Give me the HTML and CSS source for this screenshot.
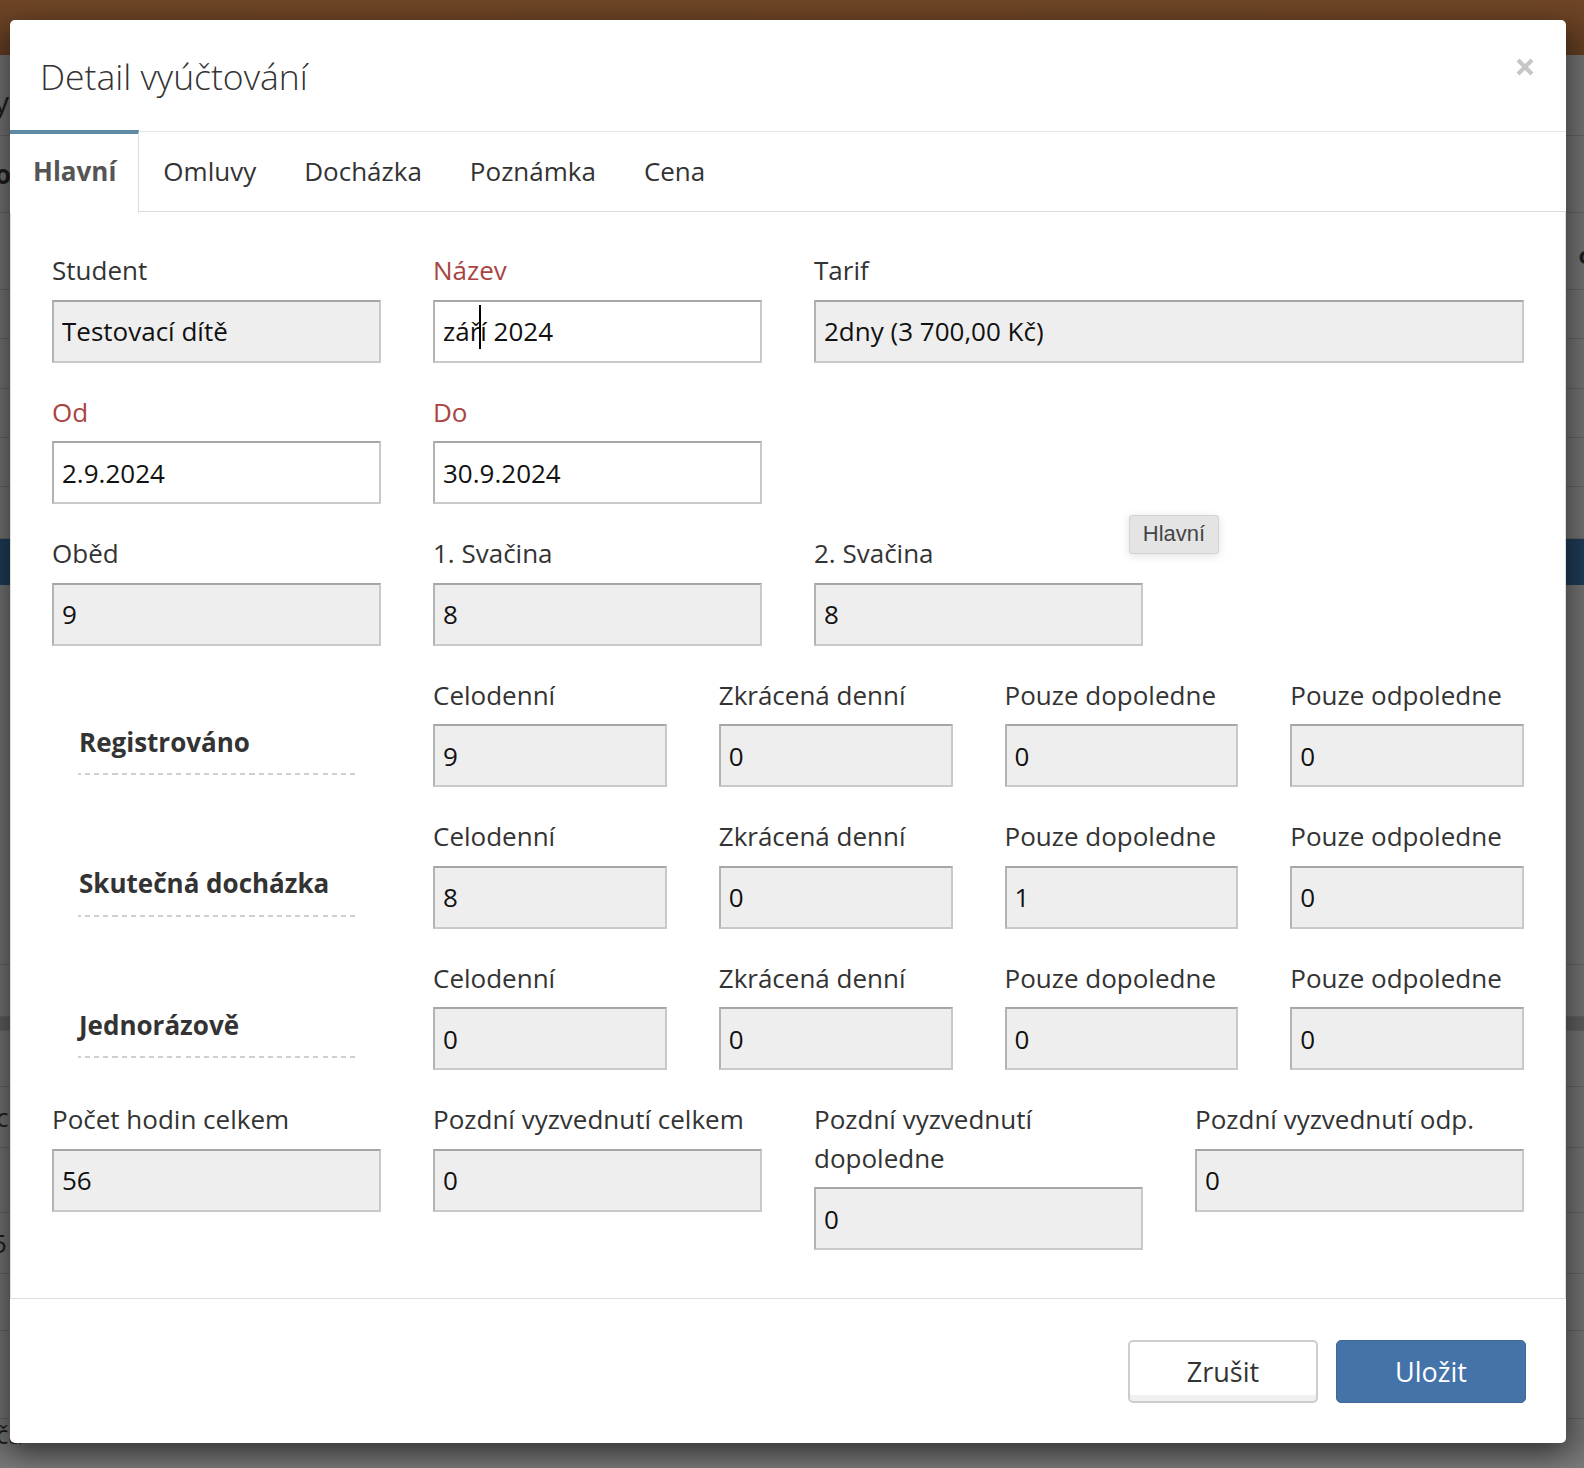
FILE: index.html
```html
<!DOCTYPE html>
<html lang="cs">
<head>
<meta charset="utf-8">
<title>Detail vyúčtování</title>
<link rel="stylesheet" href="styles.css">
</head>
<body>
<div class="page">
  <div class="topbar"></div>
  <div class="bg-row h81"><span class="frag-l fy">y</span></div>
  <div class="bg-row h77"><span class="frag-l fo">o</span></div>
  <div class="bg-row h77"><span class="frag-r">o...</span></div>
  <div class="bg-row h49"></div>
  <div class="bg-row h50"></div>
  <div class="bg-row h49"></div>
  <div class="bg-row h49"></div>
  <div class="bg-row h52"></div>
  <div class="bg-row blue"></div>
  <div class="bg-row h380"></div>
  <div class="bg-row h52"></div>
  <div class="bg-row dark"></div>
  <div class="bg-row h56"></div>
  <div class="bg-row h61"><span class="frag-l fc">c</span></div>
  <div class="bg-row h65"></div>
  <div class="bg-row h61"><span class="frag-l f5">5</span></div>
  <div class="bg-row h57"></div>
  <div class="bg-row h88"></div>
  <div class="bg-row h50 top"><span class="frag-l fa">ča</span></div>
</div>

<div class="modal">
  <div class="modal-header">
    <h4 class="modal-title">Detail vyúčtování</h4>
    <button class="close" type="button" aria-label="Zavřít">
      <svg viewBox="0 0 18 18" width="18" height="18"><path d="M2 2 L16 16 M16 2 L2 16" stroke="#c6c6c6" stroke-width="4.2" fill="none"/></svg>
    </button>
  </div>

  <ul class="tabs">
    <li class="tab active">Hlavní</li>
    <li class="tab">Omluvy</li>
    <li class="tab">Docházka</li>
    <li class="tab">Poznámka</li>
    <li class="tab">Cena</li>
  </ul>

  <div class="pane">
    <div class="row">
      <div class="group"><label>Student</label><input class="ctl ro" readonly value="Testovací dítě"></div>
      <div class="group"><label class="req">Název</label><div class="caret-wrap"><input class="ctl" value="září 2024"><span class="caret"></span></div></div>
      <div class="group span2"><label>Tarif</label><input class="ctl ro" readonly value="2dny (3 700,00 Kč)"></div>
    </div>

    <div class="row">
      <div class="group"><label class="req">Od</label><input class="ctl" value="2.9.2024"></div>
      <div class="group"><label class="req">Do</label><input class="ctl" value="30.9.2024"></div>
    </div>

    <div class="row">
      <div class="group"><label>Oběd</label><input class="ctl ro" readonly value="9"></div>
      <div class="group"><label>1. Svačina</label><input class="ctl ro" readonly value="8"></div>
      <div class="group"><label>2. Svačina</label><input class="ctl ro" readonly value="8"></div>
    </div>

    <div class="row">
      <div class="sect"><span>Registrováno</span></div>
      <div class="sub">
        <div class="group"><label>Celodenní</label><input class="ctl ro" readonly value="9"></div>
        <div class="group"><label>Zkrácená denní</label><input class="ctl ro" readonly value="0"></div>
        <div class="group"><label>Pouze dopoledne</label><input class="ctl ro" readonly value="0"></div>
        <div class="group"><label>Pouze odpoledne</label><input class="ctl ro" readonly value="0"></div>
      </div>
    </div>

    <div class="row">
      <div class="sect"><span>Skutečná docházka</span></div>
      <div class="sub">
        <div class="group"><label>Celodenní</label><input class="ctl ro" readonly value="8"></div>
        <div class="group"><label>Zkrácená denní</label><input class="ctl ro" readonly value="0"></div>
        <div class="group"><label>Pouze dopoledne</label><input class="ctl ro" readonly value="1"></div>
        <div class="group"><label>Pouze odpoledne</label><input class="ctl ro" readonly value="0"></div>
      </div>
    </div>

    <div class="row">
      <div class="sect"><span>Jednorázově</span></div>
      <div class="sub">
        <div class="group"><label>Celodenní</label><input class="ctl ro" readonly value="0"></div>
        <div class="group"><label>Zkrácená denní</label><input class="ctl ro" readonly value="0"></div>
        <div class="group"><label>Pouze dopoledne</label><input class="ctl ro" readonly value="0"></div>
        <div class="group"><label>Pouze odpoledne</label><input class="ctl ro" readonly value="0"></div>
      </div>
    </div>

    <div class="row">
      <div class="group"><label>Počet hodin celkem</label><input class="ctl ro" readonly value="56"></div>
      <div class="group"><label>Pozdní vyzvednutí celkem</label><input class="ctl ro" readonly value="0"></div>
      <div class="group"><label>Pozdní vyzvednutí dopoledne</label><input class="ctl ro" readonly value="0"></div>
      <div class="group"><label>Pozdní vyzvednutí odp.</label><input class="ctl ro" readonly value="0"></div>
    </div>
  </div>

  <div class="modal-footer">
    <button class="btn btn-default" type="button">Zrušit</button>
    <button class="btn btn-primary" type="button">Uložit</button>
  </div>

  <div class="tooltip">Hlavní</div>
</div>
</body>
</html>
```

FILE: styles.css
```css
html, body {
  margin: 0;
  padding: 0;
}
body {
  width: 1584px;
  height: 1468px;
  overflow: hidden;
  position: relative;
  background: linear-gradient(#6e6e6e, #6e6e6e 1440px, #7a7a7a);
  font-family: "Open Sans", "Noto Sans", sans-serif;
}

/* background page (dimmed) */
.page {
  width: 100%;
}
.topbar {
  height: 55px;
  background: linear-gradient(#6f4527, #5e3a20);
}
.bg-row {
  border-bottom: 1px solid #5f5f5f;
  box-sizing: border-box;
  display: flex;
  align-items: center;
  overflow: hidden;
  font-size: 26px;
  color: #1c1c1c;
}
.h49 { height: 49px; }
.h50 { height: 50px; }
.h52 { height: 52px; }
.h56 { height: 56px; }
.h57 { height: 57px; }
.h61 { height: 61px; }
.h65 { height: 65px; }
.h77 { height: 77px; }
.h81 { height: 81px; }
.h88 { height: 88px; }
.h380 { height: 380px; }
.blue { height: 46px; background: #1d3a54; border-bottom: none; }
.dark { height: 14px; background: #5a5a5a; }
.top { align-items: flex-start; border-bottom: none; }

.frag-l {
  margin-left: -6px;
}
.fy { font-size: 30px; margin-top: 12px; }
.fo { font-weight: 700; margin-left: -5px; }
.fc { margin-left: -4px; }
.f5 { margin-left: -8px; }
.fa { margin-left: -4px; line-height: 1; margin-top: 2px; }
.frag-r {
  margin-left: auto;
  margin-right: -30px;
  font-weight: 700;
  font-size: 24px;
  margin-top: 6px;
}

/* modal */
.modal {
  position: absolute;
  left: 10px;
  top: 20px;
  width: 1556px;
  height: 1423px;
  background: #fff;
  border-radius: 5px;
  box-shadow: 0 10px 30px rgba(0, 0, 0, 0.55);
  overflow: hidden;
  color: #333;
}
.modal-header {
  height: 112px;
  border-bottom: 1px solid #e5e5e5;
  display: flex;
  align-items: center;
  justify-content: space-between;
  padding: 0 32px 0 30px;
  box-sizing: border-box;
}
.modal-title {
  margin: 0;
  font-size: 35.5px;
  font-weight: 300;
  color: #333;
}
.close {
  border: 0;
  background: none;
  padding: 0;
  width: 18px;
  height: 18px;
  margin-top: -18px;
  display: block;
}
.close svg { display: block; }

/* tabs */
.tabs {
  list-style: none;
  margin: 0;
  padding: 0;
  display: flex;
  height: 80px;
  border-bottom: 1px solid #ddd;
  box-sizing: border-box;
}
.tab {
  display: flex;
  align-items: center;
  padding: 0 24px 2px;
  font-size: 26px;
  color: #333;
}
.tab.active {
  font-weight: 700;
  color: #555;
  background: #fff;
  border-top: 4px solid #5e8aa4;
  border-right: 1px solid #ddd;
  margin-top: -2px;
  height: 83px;
  box-sizing: border-box;
  padding: 0 22px 6px 23px;
}

/* pane */
.pane {
  border: 1px solid #ddd;
  border-top: 0;
  height: 1087px;
  box-sizing: border-box;
  padding: 39px 41px 0;
}
.row {
  display: grid;
  grid-template-columns: repeat(4, 1fr);
  column-gap: 52px;
}
.group {
  margin-bottom: 30px;
}
.span2 {
  grid-column: span 2;
}
label {
  display: block;
  font-size: 26px;
  line-height: 38.5px;
  margin-bottom: 10px;
  color: #333;
}
label.req {
  color: #a94442;
}
.ctl {
  display: block;
  width: 100%;
  height: 63px;
  box-sizing: border-box;
  margin: 0;
  padding: 0 8px;
  font-family: "Open Sans", "Noto Sans", sans-serif;
  font-size: 26px;
  color: #111;
  background: #fff;
  border: 2px solid #c9c9c9;
  border-top-color: #a6a6a6;
  border-left-color: #b3b3b3;
  border-radius: 0;
  outline: none;
}
.ctl.ro {
  background: #eee;
}
.caret-wrap {
  position: relative;
}
.caret {
  position: absolute;
  left: 46px;
  top: 5px;
  width: 2px;
  height: 44px;
  background: #000;
}

/* attendance sections */
.sect {
  margin: 0 26px;
  padding-top: 47px;
  align-self: start;
}
.sect span {
  display: block;
  font-size: 26px;
  line-height: 38.5px;
  font-weight: 700;
  color: #333;
  padding: 0 0 12px 1px;
  border-bottom: 2px solid transparent;
  border-image: repeating-linear-gradient(to right, #cfcfcf 0 5px, transparent 5px 9px) 2;
}
.sub {
  grid-column: span 3;
  display: grid;
  grid-template-columns: repeat(4, 1fr);
  column-gap: 52px;
}

/* footer */
.modal-footer {
  height: 145px;
  display: flex;
  justify-content: flex-end;
  align-items: center;
  gap: 18px;
  padding-right: 40px;
  box-sizing: border-box;
}
.btn {
  width: 190px;
  height: 63px;
  box-sizing: border-box;
  border-radius: 5px;
  font-family: "Open Sans", "Noto Sans", sans-serif;
  font-size: 27px;
  padding: 0;
}
.btn-default {
  background: #fff;
  color: #333;
  border: 2px solid #cdcdcd;
  box-shadow: inset 0 -6px 0 #f0f0f0;
}
.btn-primary {
  background: #4473a9;
  color: #fff;
  border: 1px solid #3d6898;
}

/* tooltip */
.tooltip {
  position: absolute;
  left: 1119px;
  top: 495px;
  width: 90px;
  height: 39px;
  box-sizing: border-box;
  background: #e4e4e4;
  border: 1px solid #d2d2d2;
  border-radius: 3px;
  box-shadow: 0 2px 10px rgba(0, 0, 0, 0.12);
  font-family: "Liberation Sans", Arial, sans-serif;
  font-size: 22px;
  color: #444;
  display: flex;
  align-items: center;
  justify-content: center;
  padding-bottom: 1px;
}
```
